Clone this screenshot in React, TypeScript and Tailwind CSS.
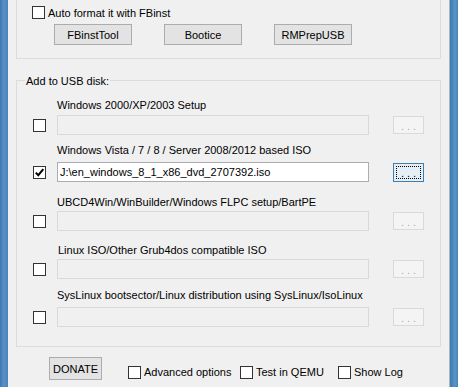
import React from "react";

const Check = ({ checked = false }: { checked?: boolean }) => (
  <div className="w-[13px] h-[13px] shrink-0 border border-[#333333] bg-white flex items-center justify-center">
    {checked && (
      <svg width="11" height="11" viewBox="0 0 11 11">
        <path d="M1.8 5.6 L4.3 8.2 L9.3 2.2" stroke="#000" strokeWidth="2" fill="none" />
      </svg>
    )}
  </div>
);

const Btn = ({ children }: { children: React.ReactNode }) => (
  <div className="w-[78px] h-[21px] border border-[#acacac] bg-[#e3e3e3] flex items-center justify-center leading-[14px]">
    {children}
  </div>
);

type Row = {
  label: string;
  mt: string;
  gap: string;
  pl: string;
  enabled?: boolean;
  checked?: boolean;
  value?: string;
};

const rows: Row[] = [
  { label: "Windows 2000/XP/2003 Setup", mt: "mt-[17px]", gap: "mt-[3px]", pl: "pl-[40px]" },
  {
    label: "Windows Vista / 7 / 8 / Server 2008/2012 based ISO",
    mt: "mt-[8px]",
    gap: "mt-[5px]",
    pl: "pl-[40px]",
    enabled: true,
    checked: true,
    value: "J:\\en_windows_8_1_x86_dvd_2707392.iso",
  },
  { label: "UBCD4Win/WinBuilder/Windows FLPC setup/BartPE", mt: "mt-[13px]", gap: "mt-[2px]", pl: "pl-[40px]" },
  { label: "Linux ISO/Other Grub4dos compatible ISO", mt: "mt-[12px]", gap: "mt-[2px]", pl: "pl-[41px]" },
  { label: "SysLinux bootsector/Linux distribution using SysLinux/IsoLinux", mt: "mt-[9px]", gap: "mt-[5px]", pl: "pl-[40px]" },
];

export default function App() {
  return (
    <div className="w-[458px] h-[387px] flex bg-[#f0f0f0] overflow-hidden text-[11px] leading-[14px] text-black font-['Liberation_Sans',Arial,sans-serif]">
      <div className="w-[8px] h-full shrink-0 bg-[linear-gradient(to_right,#3f78ad,#5790c4_45%,#4a85ba)]" />
      <div className="flex-1 flex flex-col border-r border-[#a9b8c6]">
        {/* top group */}
        <div className="mx-[8px] h-[59px] border-x border-b border-[#dcdcdc]">
          <div className="mt-[6px] ml-[15px] flex items-center h-[13px]">
            <Check />
            <span className="ml-[3px] whitespace-nowrap">Auto format it with FBinst</span>
          </div>
          <div className="mt-[5px] ml-[37px] flex gap-[32px]">
            <Btn>FBinstTool</Btn>
            <Btn>Bootice</Btn>
            <Btn>RMPrepUSB</Btn>
          </div>
        </div>

        {/* Add to USB disk */}
        <div className="relative mx-[8px] mt-[21px] border border-[#dcdcdc] pb-[19px]">
          <div className="absolute left-[8px] top-[-7px] px-[1px] bg-[#f0f0f0] whitespace-nowrap">Add to USB disk:</div>
          {rows.map((r) => (
            <div key={r.label} className={r.mt}>
              <div className={`${r.pl} h-[14px] whitespace-nowrap`}>{r.label}</div>
              <div className={`${r.gap} flex items-center h-[20px]`}>
                <div className="ml-[16px]">
                  <Check checked={r.checked} />
                </div>
                {r.enabled ? (
                  <div className="ml-[11px] w-[312px] h-[20px] border border-[#abadb3] bg-white pl-[2px] leading-[18px] whitespace-nowrap overflow-hidden">
                    {r.value}
                  </div>
                ) : (
                  <div className="ml-[11px] w-[312px] h-[20px] border border-[#d9d9d9] bg-[#f0f0f0]" />
                )}
                {r.enabled ? (
                  <div className="relative ml-[24px] w-[31px] h-[19px] border border-[#3c7fb1] bg-[#e5edf5] flex items-center justify-center">
                    <div className="absolute inset-[2px] border border-dotted border-black" />
                    <span className="tracking-[3px] pl-[3px] mt-[2px]">...</span>
                  </div>
                ) : (
                  <div className="ml-[24px] w-[31px] h-[18px] border border-[#d9d9d9] bg-[#f4f4f4] flex items-center justify-center text-[#a8a8a8]">
                    <span className="tracking-[3px] pl-[3px] mt-[2px]">...</span>
                  </div>
                )}
              </div>
            </div>
          ))}
        </div>

        {/* bottom */}
        <div className="mt-[10px] flex items-start">
          <div className="ml-[41px] w-[53px] h-[23px] border border-[#acacac] bg-[#e3e3e3] flex items-center justify-center">
            DONATE
          </div>
          <div className="ml-[26px] mt-[8px] w-[112px] flex items-center">
            <Check />
            <span className="ml-[3px] whitespace-nowrap">Advanced options</span>
          </div>
          <div className="mt-[8px] w-[98px] flex items-center">
            <Check />
            <span className="ml-[3px] whitespace-nowrap">Test in QEMU</span>
          </div>
          <div className="mt-[8px] flex items-center">
            <Check />
            <span className="ml-[3px] whitespace-nowrap">Show Log</span>
          </div>
        </div>
      </div>
      <div className="w-[8px] h-full shrink-0 bg-[linear-gradient(to_right,#3f78ad,#4a85ba_30%,#5a93c6_60%,#4a85ba)]" />
    </div>
  );
}
